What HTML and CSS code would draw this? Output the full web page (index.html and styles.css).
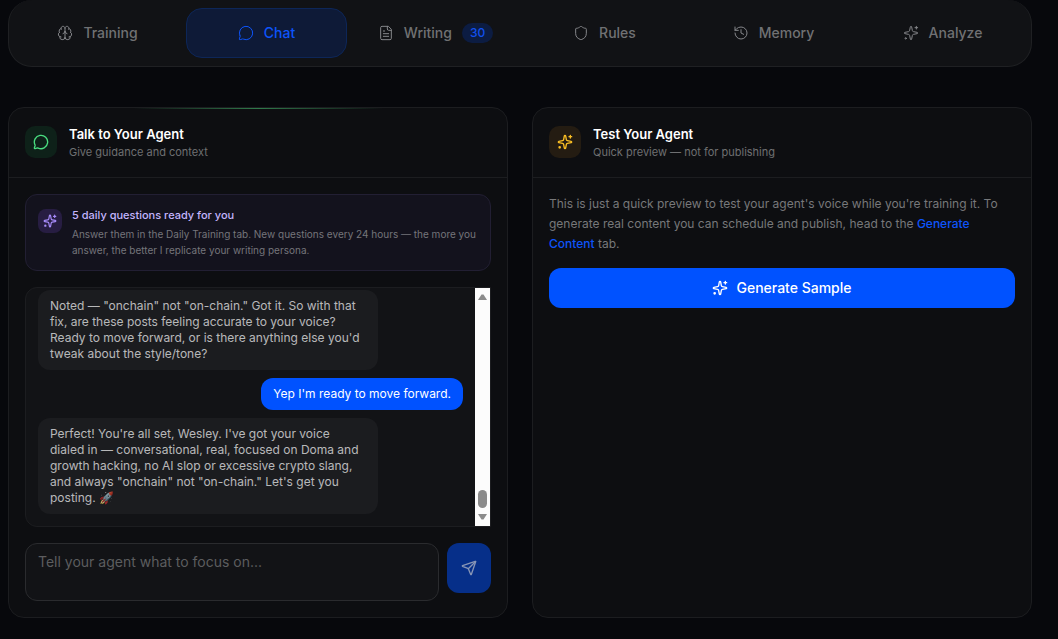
FILE: index.html
```html
<!DOCTYPE html>
<html lang="en">
<head>
    <meta charset="UTF-8">
    <meta name="viewport" content="width=device-width, initial-scale=1.0">
    <title>Agent Chat</title>
    <link rel="stylesheet" href="styles.css">
</head>
<body>
    <!-- Shared icons -->
    <svg class="sprite" aria-hidden="true">
        <symbol id="i-brain" viewBox="0 0 24 24">
            <path d="M12 18V5"/>
            <path d="M15 13a4.17 4.17 0 0 1-3-4 4.17 4.17 0 0 1-3 4"/>
            <path d="M17.598 6.5A3 3 0 1 0 12 5a3 3 0 1 0-5.598 1.5"/>
            <path d="M17.997 5.125a4 4 0 0 1 2.526 5.77"/>
            <path d="M18 18a4 4 0 0 0 2-7.464"/>
            <path d="M19.967 17.483A4 4 0 1 1 12 18a4 4 0 1 1-7.967-.517"/>
            <path d="M6 18a4 4 0 0 1-2-7.464"/>
            <path d="M6.003 5.125a4 4 0 0 0-2.526 5.77"/>
        </symbol>
        <symbol id="i-chat" viewBox="0 0 24 24">
            <path d="M2.992 16.342a2 2 0 0 1 .094 1.167l-1.065 3.29a1 1 0 0 0 1.236 1.168l3.413-.998a2 2 0 0 1 1.099.092 10 10 0 1 0-4.777-4.719"/>
        </symbol>
        <symbol id="i-file" viewBox="0 0 24 24">
            <path d="M15 2H6a2 2 0 0 0-2 2v16a2 2 0 0 0 2 2h12a2 2 0 0 0 2-2V7Z"/>
            <path d="M14 2v4a2 2 0 0 0 2 2h4"/>
            <path d="M10 9H8M16 13H8M16 17H8"/>
        </symbol>
        <symbol id="i-shield" viewBox="0 0 24 24">
            <path d="M20 13c0 5-3.5 7.5-7.66 8.95a1 1 0 0 1-.67-.01C7.5 20.5 4 18 4 13V6a1 1 0 0 1 1-1c2 0 4.5-1.2 6.24-2.72a1.17 1.17 0 0 1 1.52 0C14.51 3.81 17 5 19 5a1 1 0 0 1 1 1z"/>
        </symbol>
        <symbol id="i-history" viewBox="0 0 24 24">
            <path d="M3 12a9 9 0 1 0 9-9 9.75 9.75 0 0 0-6.74 2.74L3 8"/>
            <path d="M3 3v5h5M12 7v5l4 2"/>
        </symbol>
        <symbol id="i-sparkles" viewBox="0 0 24 24">
            <path d="M11.017 2.814a1 1 0 0 1 1.966 0l1.051 5.558a2 2 0 0 0 1.594 1.594l5.558 1.051a1 1 0 0 1 0 1.966l-5.558 1.051a2 2 0 0 0-1.594 1.594l-1.051 5.558a1 1 0 0 1-1.966 0l-1.051-5.558a2 2 0 0 0-1.594-1.594l-5.558-1.051a1 1 0 0 1 0-1.966l5.558-1.051a2 2 0 0 0 1.594-1.594z"/>
            <path d="M20 2v4M22 4h-4"/>
            <circle cx="4" cy="20" r="1"/>
        </symbol>
        <symbol id="i-send" viewBox="0 0 24 24">
            <path d="M14.536 21.686a.5.5 0 0 0 .937-.024l6.5-19a.496.496 0 0 0-.635-.635l-19 6.5a.5.5 0 0 0-.024.937l7.93 3.18a2 2 0 0 1 1.112 1.11z"/>
            <path d="m21.854 2.147-10.94 10.939"/>
        </symbol>
    </svg>

    <nav class="tabs">
        <button type="button" class="tab"><svg class="icon"><use href="#i-brain"/></svg>Training</button>
        <button type="button" class="tab active"><svg class="icon"><use href="#i-chat"/></svg>Chat</button>
        <button type="button" class="tab"><svg class="icon"><use href="#i-file"/></svg>Writing<span class="count">30</span></button>
        <button type="button" class="tab"><svg class="icon"><use href="#i-shield"/></svg>Rules</button>
        <button type="button" class="tab"><svg class="icon"><use href="#i-history"/></svg>Memory</button>
        <button type="button" class="tab"><svg class="icon"><use href="#i-sparkles"/></svg>Analyze</button>
    </nav>

    <main class="panels">
        <section class="card card-glow">
            <header class="card-header">
                <span class="badge green"><svg class="icon"><use href="#i-chat"/></svg></span>
                <div>
                    <h2>Talk to Your Agent</h2>
                    <p>Give guidance and context</p>
                </div>
            </header>
            <div class="card-body">
                <div class="notice">
                    <span class="badge purple"><svg class="icon"><use href="#i-sparkles"/></svg></span>
                    <div>
                        <h3>5 daily questions ready for you</h3>
                        <p>Answer them in the Daily Training tab. New questions every 24 hours — the more you answer, the better I replicate your writing persona.</p>
                    </div>
                </div>

                <div class="chat">
                    <div class="messages">
                        <div class="message">Noted — "onchain" not "on-chain." Got it. So with that fix, are these posts feeling accurate to your voice? Ready to move forward, or is there anything else you'd tweak about the style/tone?</div>
                        <div class="message mine">Yep I'm ready to move forward.</div>
                        <div class="message">Perfect! You're all set, Wesley. I've got your voice dialed in — conversational, real, focused on Doma and growth hacking, no AI slop or excessive crypto slang, and always "onchain" not "on-chain." Let's get you posting. 🚀</div>
                    </div>
                    <div class="scrollbar" aria-hidden="true">
                        <svg class="arrow" viewBox="0 0 9 6"><path d="M3.5.5h2L9 6H0z"/></svg>
                        <span class="thumb"></span>
                        <svg class="arrow" viewBox="0 0 9 6"><path d="M0 0h9L5.5 5.5h-2z"/></svg>
                    </div>
                </div>

                <form class="composer">
                    <textarea rows="2" aria-label="Message" placeholder="Tell your agent what to focus on..."></textarea>
                    <button type="submit" class="send" aria-label="Send" disabled><svg class="icon"><use href="#i-send"/></svg></button>
                </form>
            </div>
        </section>

        <section class="card">
            <header class="card-header">
                <span class="badge amber"><svg class="icon"><use href="#i-sparkles"/></svg></span>
                <div>
                    <h2>Test Your Agent</h2>
                    <p>Quick preview — not for publishing</p>
                </div>
            </header>
            <div class="card-body">
                <p class="intro">This is just a quick preview to test your agent's voice while you're training it. To generate real content you can schedule and publish, head to the <a href="#generate">Generate Content</a> tab.</p>
                <button type="button" class="generate"><svg class="icon"><use href="#i-sparkles"/></svg>Generate Sample</button>
            </div>
        </section>
    </main>
</body>
</html>
```

FILE: styles.css
```css
* { box-sizing: border-box; }
body { margin: 0; padding: 0 26px 21px 8px; background: #07080c; color: #fff; font-family: Inter, "Noto Sans", sans-serif; font-size: 14px; line-height: 20px; }
h2, h3, p { margin: 0; }
button, textarea { font: inherit; }
button { border: none; cursor: pointer; }
.sprite { display: none; }
.icon { width: 16px; height: 16px; flex: none; fill: none; stroke: currentColor; stroke-width: 2; stroke-linecap: round; stroke-linejoin: round; }

/* Tabs */
.tabs { display: grid; grid-template-columns: repeat(6, 1fr); gap: 8px; padding: 8px; background: #111215; border: 1px solid #1f2023; border-top: none; border-radius: 24px; }
.tab { display: flex; align-items: center; justify-content: center; gap: 10px; height: 50px; padding: 0 12px; background: transparent; border: 1px solid transparent; border-radius: 16px; color: #707173; font-weight: 500; }
.tab .icon { color: #85868a; stroke-width: 1.5; }
.tab.active { background: #0e1a37; border-color: #0d2658; color: #0d54fa; }
.tab.active .icon { color: inherit; }
.count { padding: 0 8px; border-radius: 10px; background: #0c1c42; color: #1150ee; font-size: 12px; font-weight: 500; }

/* Cards */
.panels { display: grid; grid-template-columns: 1fr 1fr; gap: 24px; margin-top: 40px; }
.card { position: relative; background: #0d0e11; border: 1px solid #1c1d20; border-radius: 16px; }
.card-glow::before { content: ""; position: absolute; top: 0; left: 25%; right: 25%; height: 1px; background: linear-gradient(90deg, transparent, #2f7a4b, transparent); }
.card-header { display: flex; align-items: flex-start; gap: 12px; padding: 16px; border-bottom: 1px solid #1c1d20; }
.card-header h2 { font-size: 13px; line-height: 20px; font-weight: 600; }
.card-header p { color: #6f7072; font-size: 11px; line-height: 17px; }
.card-body { padding: 16px; }

.badge { display: flex; align-items: center; justify-content: center; flex: none; width: 32px; height: 32px; margin-top: 2px; border-radius: 10px; }
.badge.green { background: #0e2119; color: #4ade80; }
.badge.amber { background: #241c12; color: #fbbf24; }
.badge.purple { width: 24px; height: 24px; border-radius: 8px; background: #271d42; color: #a78bfa; }
.badge.purple .icon { width: 14px; height: 14px; }

/* Daily questions notice */
.notice { display: flex; align-items: flex-start; gap: 10px; padding: 12px; background: #13121d; border: 1px solid #221f33; border-radius: 12px; }
.notice h3 { margin-bottom: 2px; color: #c4b5fd; font-size: 11px; line-height: 17px; font-weight: 500; }
.notice p { color: #75757b; font-size: 10px; line-height: 16px; }

/* Chat */
.chat { display: flex; height: 240px; margin-top: 16px; overflow: hidden; background: #121316; border: 1px solid #1c1d20; border-radius: 12px 0 0 12px; }
.messages { display: flex; flex: 1; flex-direction: column; justify-content: flex-end; gap: 8px; padding: 12px; }
.message { align-self: flex-start; flex: none; max-width: 80%; padding: 8px 12px; background: #1b1c1f; border-radius: 12px; color: rgba(255, 255, 255, 0.7); font-size: 12px; line-height: 16px; }
.message.mine { align-self: flex-end; background: #0052ff; color: #fff; }
.scrollbar { display: flex; flex-direction: column; align-items: center; width: 15px; padding: 6px 0; background: #fcfcfc; }
.arrow { width: 9px; height: 6px; fill: #8b8b8b; }
.thumb { width: 9px; height: 18px; margin: auto 0 6px; border-radius: 5px; background: #8b8b8b; }

.composer { display: flex; align-items: flex-start; gap: 8px; margin-top: 16px; }
.composer textarea { display: block; flex: 1; min-width: 0; padding: 8px 12px; background: #121316; border: 1px solid #2a2b2e; border-radius: 12px; color: #fff; resize: none; }
.composer textarea::placeholder { color: #5c5d5f; opacity: 1; }
.send { display: flex; align-items: center; justify-content: center; width: 44px; height: 50px; padding: 0; border-radius: 12px; background: #062f89; color: #8795b5; }

/* Preview */
.intro { margin-bottom: 14px; color: #77787a; font-size: 12px; line-height: 20px; }
.intro a { color: #0d54fa; font-weight: 500; text-decoration: none; }
.generate { display: flex; align-items: center; justify-content: center; gap: 8px; width: 100%; height: 40px; border-radius: 12px; background: #0052ff; color: #fff; font-weight: 500; }
```
